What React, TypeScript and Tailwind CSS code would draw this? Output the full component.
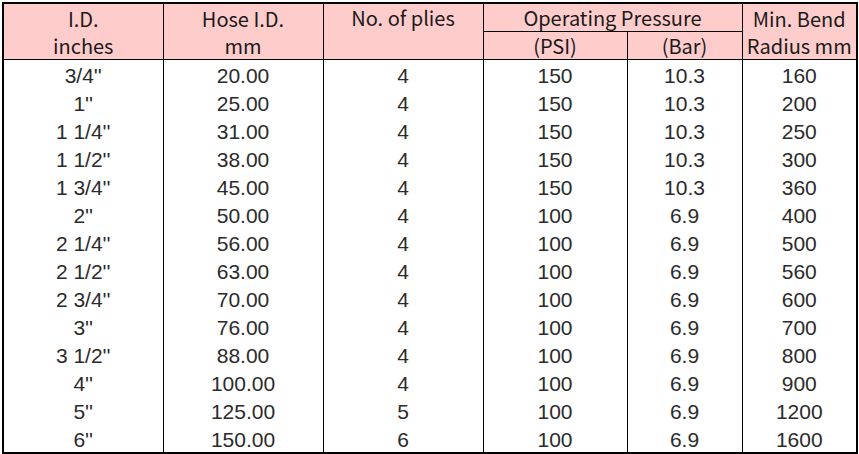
const rows: [string, string, string, string, string, string][] = [
  ["3/4''", '20.00', '4', '150', '10.3', '160'],
  ["1''", '25.00', '4', '150', '10.3', '200'],
  ["1 1/4''", '31.00', '4', '150', '10.3', '250'],
  ["1 1/2''", '38.00', '4', '150', '10.3', '300'],
  ["1 3/4''", '45.00', '4', '150', '10.3', '360'],
  ["2''", '50.00', '4', '100', '6.9', '400'],
  ["2 1/4''", '56.00', '4', '100', '6.9', '500'],
  ["2 1/2''", '63.00', '4', '100', '6.9', '560'],
  ["2 3/4''", '70.00', '4', '100', '6.9', '600'],
  ["3''", '76.00', '4', '100', '6.9', '700'],
  ["3 1/2''", '88.00', '4', '100', '6.9', '800'],
  ["4''", '100.00', '4', '100', '6.9', '900'],
  ["5''", '125.00', '5', '100', '6.9', '1200'],
  ["6''", '150.00', '6', '100', '6.9', '1600'],
];

const head = 'border border-black bg-[#ffcccc] p-0 text-center align-middle font-normal';

export default function App() {
  return (
    <div className="h-[454px] w-[859px] bg-white pt-[2px] pl-[2px]">
      <table className="w-[854px] table-fixed border-collapse border-2 border-black text-black">
        <colgroup>
          <col className="w-[160px]" />
          <col className="w-[160px]" />
          <col className="w-[160px]" />
          <col className="w-[144px]" />
          <col className="w-[115px]" />
          <col className="w-[115px]" />
        </colgroup>
        <thead className="font-['Noto_Sans_CJK_SC',sans-serif] text-[20px] leading-[27px] text-[#1a1a1a]">
          <tr className="h-[27px]">
            <th rowSpan={2} className={head}>
              I.D.
              <br />
              inches
            </th>
            <th rowSpan={2} className={head}>
              Hose I.D.
              <br />
              mm
            </th>
            <th rowSpan={2} className={head + ' align-top'}>
              No. of plies
            </th>
            <th colSpan={2} className={head}>
              Operating Pressure
            </th>
            <th rowSpan={2} className={head}>
              Min. Bend
              <br />
              Radius mm
            </th>
          </tr>
          <tr className="h-[27px]">
            <th className={head}>(PSI)</th>
            <th className={head}>(Bar)</th>
          </tr>
        </thead>
        <tbody className="font-['Liberation_Sans',Arial,sans-serif] text-[21px] text-[#2b2b2b]">
          {rows.map((r) => (
            <tr key={r[0]} className="h-[28px]">
              {r.map((v, i) => (
                <td
                  key={i}
                  className="border-x border-black p-0 pt-[4px] text-center leading-[24px]"
                >
                  {v}
                </td>
              ))}
            </tr>
          ))}
        </tbody>
      </table>
    </div>
  );
}
